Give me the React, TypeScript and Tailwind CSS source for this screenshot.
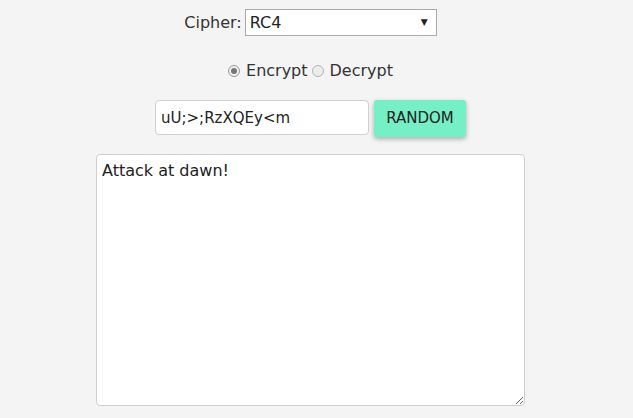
export default function App() {
  return (
    <div className="flex min-h-[418px] flex-col items-center bg-[#f4f4f4] pr-[12px] font-['DejaVu_Sans',sans-serif] text-[16px] text-[#222]">
      <div className="mt-[9px] flex items-center gap-[3px]">
        <span className="text-[#333]">Cipher:</span>
        <div className="flex h-[27px] w-[192px] items-center justify-between border border-[#a9a9a9] bg-white pl-[4px] pr-[8px]">
          <span>RC4</span>
          <span className="text-[9px]">▼</span>
        </div>
      </div>

      <div className="mt-[25px] flex h-[20px] items-center text-[#333]">
        <span className="mr-[6px] flex h-[12px] w-[12px] items-center justify-center rounded-full border border-[#9a9a9a] bg-[#f0f0f0]">
          <span className="h-[6px] w-[6px] rounded-full bg-[#777]" />
        </span>
        <span>Encrypt</span>
        <span className="ml-[4px] mr-[6px] h-[12px] w-[12px] rounded-full border border-[#b5b5b5] bg-[#ececec]" />
        <span>Decrypt</span>
      </div>

      <div className="mt-[19px] flex items-start gap-[5px]">
        <input
          defaultValue="uU;>;RzXQEy<m"
          className="h-[35px] w-[214px] rounded-[4px] border border-[#d0d0d0] bg-white px-[5px] text-[15px] text-[#222] outline-none"
        />
        <button className="h-[37px] w-[92px] rounded-[3px] bg-[#74efc6] text-[15px] text-[#222] shadow-[0_2px_5px_rgba(0,0,0,0.3)]">
          RANDOM
        </button>
      </div>

      <textarea
        defaultValue="Attack at dawn!"
        className="mt-[17px] h-[252px] w-[429px] rounded-[4px] border border-[#cfcfcf] bg-white px-[5px] py-[4px] text-[16px] text-[#222] outline-none"
      />
    </div>
  );
}
